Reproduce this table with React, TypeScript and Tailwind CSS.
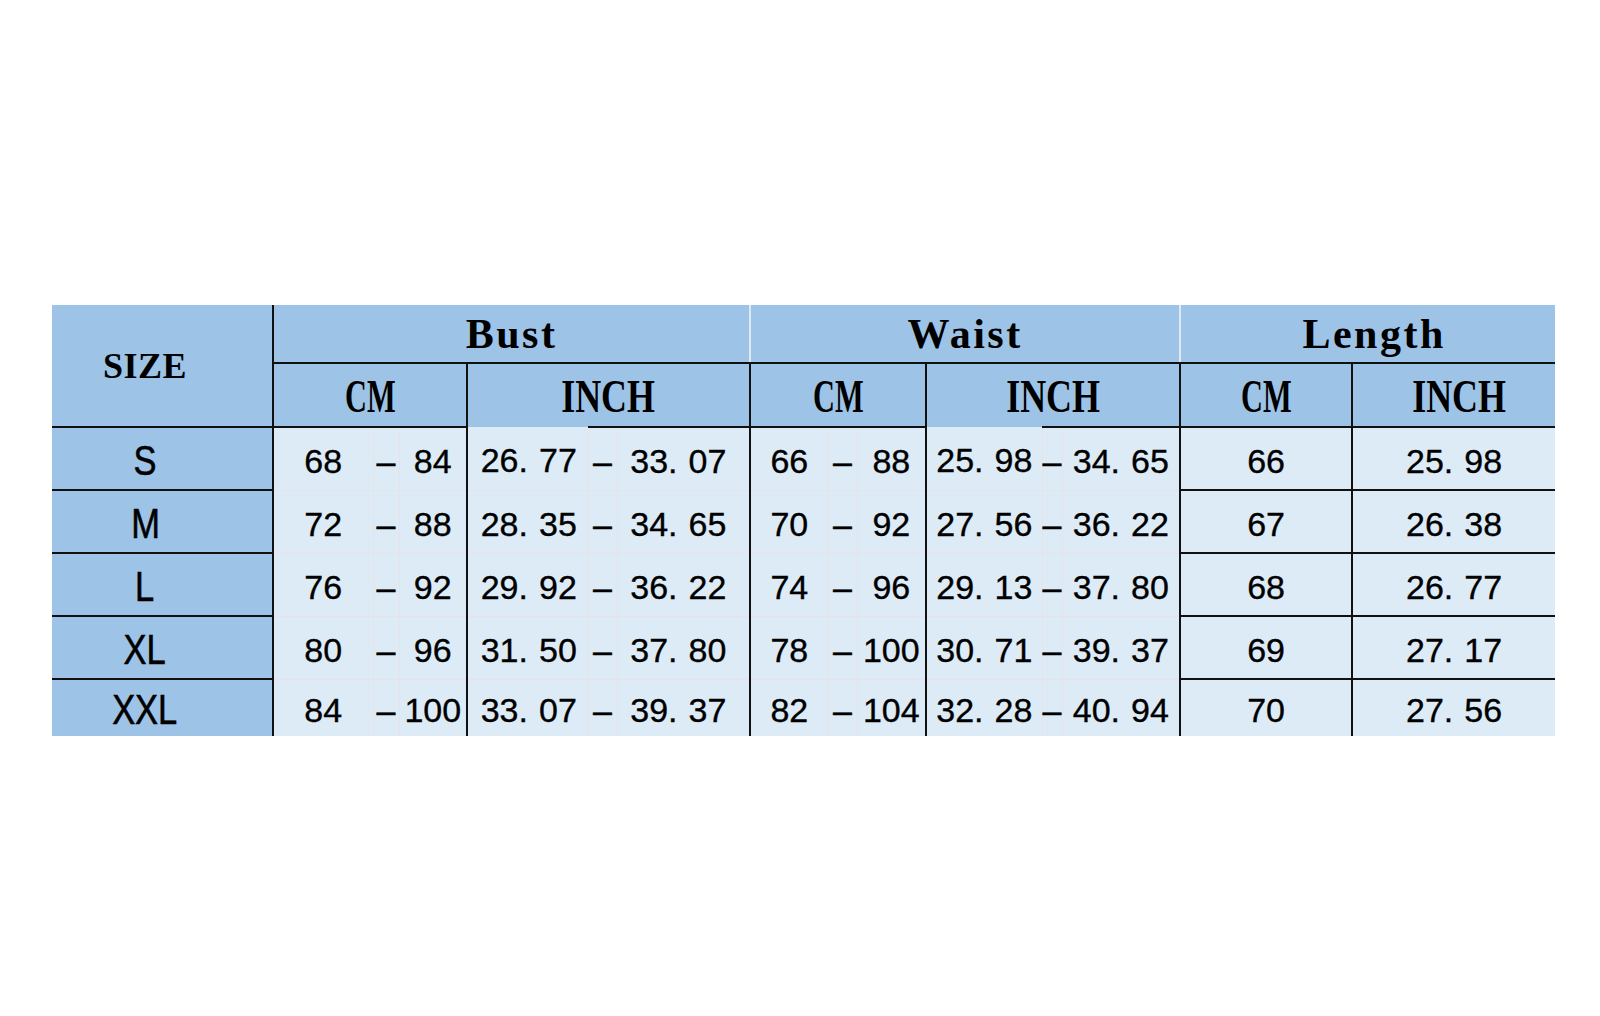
import React from "react";

type Row = {
  size: string;
  bust: [string, string];
  bustIn: [string, string];
  waist: [string, string];
  waistIn: [string, string];
  len: string;
  lenIn: string;
};

const rows: Row[] = [
  { size: "S", bust: ["68", "84"], bustIn: ["26.77", "33.07"], waist: ["66", "88"], waistIn: ["25.98", "34.65"], len: "66", lenIn: "25.98" },
  { size: "M", bust: ["72", "88"], bustIn: ["28.35", "34.65"], waist: ["70", "92"], waistIn: ["27.56", "36.22"], len: "67", lenIn: "26.38" },
  { size: "L", bust: ["76", "92"], bustIn: ["29.92", "36.22"], waist: ["74", "96"], waistIn: ["29.13", "37.80"], len: "68", lenIn: "26.77" },
  { size: "XL", bust: ["80", "96"], bustIn: ["31.50", "37.80"], waist: ["78", "100"], waistIn: ["30.71", "39.37"], len: "69", lenIn: "27.17" },
  { size: "XXL", bust: ["84", "100"], bustIn: ["33.07", "39.37"], waist: ["82", "104"], waistIn: ["32.28", "40.94"], len: "70", lenIn: "27.56" },
];

const cols = [221, 100, 26, 68, 121, 29, 133, 78, 29, 69, 116, 20, 118, 172, 203];

function Num({ v }: { v: string }) {
  const parts = v.split(".");
  if (parts.length === 1) return <>{v}</>;
  return (
    <>
      {parts[0]}.<span className="ml-[11px]">{parts[1]}</span>
    </>
  );
}

const serif = "font-['Liberation_Serif',serif] font-bold";
const sans = "font-['Liberation_Sans',Arial,sans-serif]";

export default function App() {
  return (
    <div className="min-h-[1016px] w-[1600px] bg-white pt-[305px] pl-[52px]">
      <table className="table-fixed border-collapse text-black" style={{ width: 1503 }}>
        <colgroup>
          {cols.map((w, i) => (
            <col key={i} style={{ width: w }} />
          ))}
        </colgroup>
        <thead>
          <tr className="h-[58px]">
            <th
              rowSpan={2}
              className={`bg-[#9dc3e6] border-r-2 border-b-2 border-r-[#111] border-b-[#111] p-0 pr-[34px] text-center align-middle text-[36px] leading-none tracking-[0.5px] ${serif}`}
            >
              SIZE
            </th>
            <th
              colSpan={6}
              className={`bg-[#9dc3e6] border-r-2 border-b-2 border-r-[#dde8f3] border-b-[#111] p-0 text-center align-middle text-[42px] leading-none tracking-[2.5px] ${serif}`}
            >
              Bust
            </th>
            <th
              colSpan={6}
              className={`bg-[#9dc3e6] border-r-2 border-b-2 border-r-[#dde8f3] border-b-[#111] p-0 text-center align-middle text-[42px] leading-none tracking-[2.5px] ${serif}`}
            >
              Waist
            </th>
            <th
              colSpan={2}
              className={`bg-[#9dc3e6] border-b-2 border-b-[#111] p-0 pl-[12px] text-center align-middle text-[42px] leading-none tracking-[2.5px] ${serif}`}
            >
              Length
            </th>
          </tr>
          <tr className="h-[64px]">
            <th colSpan={3} className={`bg-[#9dc3e6] border-r-2 border-b-2 border-[#111] p-0 pt-[4px] text-center align-middle text-[46px] leading-none ${serif}`}>
              <span className="inline-block scale-x-[0.66]">CM</span>
            </th>
            <th colSpan={3} className={`bg-[#9dc3e6] border-r-2 border-[#111] p-0 pt-[4px] text-center align-middle text-[46px] leading-none ${serif}`}>
              <span className="inline-block scale-x-[0.78]">INCH</span>
            </th>
            <th colSpan={3} className={`bg-[#9dc3e6] border-r-2 border-b-2 border-[#111] p-0 pt-[4px] text-center align-middle text-[46px] leading-none ${serif}`}>
              <span className="inline-block scale-x-[0.66]">CM</span>
            </th>
            <th colSpan={3} className={`bg-[#9dc3e6] border-r-2 border-[#111] p-0 pt-[4px] text-center align-middle text-[46px] leading-none ${serif}`}>
              <span className="inline-block scale-x-[0.78]">INCH</span>
            </th>
            <th className={`bg-[#9dc3e6] border-r-2 border-b-2 border-[#111] p-0 pt-[4px] text-center align-middle text-[46px] leading-none ${serif}`}>
              <span className="inline-block scale-x-[0.66]">CM</span>
            </th>
            <th className={`bg-[#9dc3e6] border-b-2 border-[#111] p-0 pt-[4px] pl-[10px] text-center align-middle text-[46px] leading-none ${serif}`}>
              <span className="inline-block scale-x-[0.78]">INCH</span>
            </th>
          </tr>
        </thead>
        <tbody>
          {rows.map((r, i) => {
            const last = i === rows.length - 1;
            const first = i === 0;
            const faintB = last ? "" : "border-b border-b-[#e8e3e6]";
            const cell = `bg-[#ddebf7] p-0 text-center align-middle text-[34px] leading-none whitespace-nowrap [-webkit-text-stroke:0.35px_#000] ${sans}`;
            const firstTop = first ? "border-t-2 border-t-[#111]" : "";
            return (
              <tr key={r.size} className={last ? "h-[57px]" : "h-[63px]"}>
                <td
                  className={`bg-[#9dc3e6] border-r-2 border-r-[#111] ${last ? "" : "border-b-2 border-b-[#111]"} p-0 pr-[34px] pt-[4px] text-center align-middle text-[42px] leading-none ${sans}`}
                >
                  <span className="inline-block scale-x-[0.82] [-webkit-text-stroke:0.6px_#000]">{r.size}</span>
                </td>
                {/* Bust CM */}
                <td className={`${cell} ${faintB} border-r border-r-[#e8e3e6] pt-[4px]`}>{r.bust[0]}</td>
                <td className={`${cell} ${faintB} border-r border-r-[#e8e3e6] pt-[4px]`}>–</td>
                <td className={`${cell} ${faintB} border-r-2 border-r-[#111] pt-[4px]`}>{r.bust[1]}</td>
                {/* Bust INCH */}
                <td className={`${cell} ${faintB} border-r border-r-[#e8e3e6] pt-[4px] pl-[2px]`}>
                  <Num v={r.bustIn[0]} />
                </td>
                <td className={`${cell} ${faintB} ${firstTop} border-r border-r-[#e8e3e6] pt-[4px]`}>–</td>
                <td className={`${cell} ${faintB} ${firstTop} border-r-2 border-r-[#111] pt-[4px] pr-[10px]`}>
                  <Num v={r.bustIn[1]} />
                </td>
                {/* Waist CM */}
                <td className={`${cell} ${faintB} border-r border-r-[#e8e3e6] pt-[4px]`}>{r.waist[0]}</td>
                <td className={`${cell} ${faintB} border-r border-r-[#e8e3e6] pt-[4px]`}>–</td>
                <td className={`${cell} ${faintB} border-r-2 border-r-[#111] pt-[4px]`}>{r.waist[1]}</td>
                {/* Waist INCH */}
                <td className={`${cell} ${faintB} border-r border-r-[#e8e3e6] pt-[4px]`}>
                  <Num v={r.waistIn[0]} />
                </td>
                <td className={`${cell} ${faintB} ${firstTop} border-r border-r-[#e8e3e6] pt-[4px]`}>–</td>
                <td className={`${cell} ${faintB} ${firstTop} border-r-2 border-r-[#111] pt-[4px]`}>
                  <Num v={r.waistIn[1]} />
                </td>
                {/* Length */}
                <td className={`${cell} ${last ? "" : "border-b-2 border-b-[#111]"} border-r-2 border-r-[#111] pt-[4px]`}>{r.len}</td>
                <td className={`${cell} ${last ? "" : "border-b-2 border-b-[#111]"} pt-[4px]`}>
                  <Num v={r.lenIn} />
                </td>
              </tr>
            );
          })}
        </tbody>
      </table>
    </div>
  );
}
